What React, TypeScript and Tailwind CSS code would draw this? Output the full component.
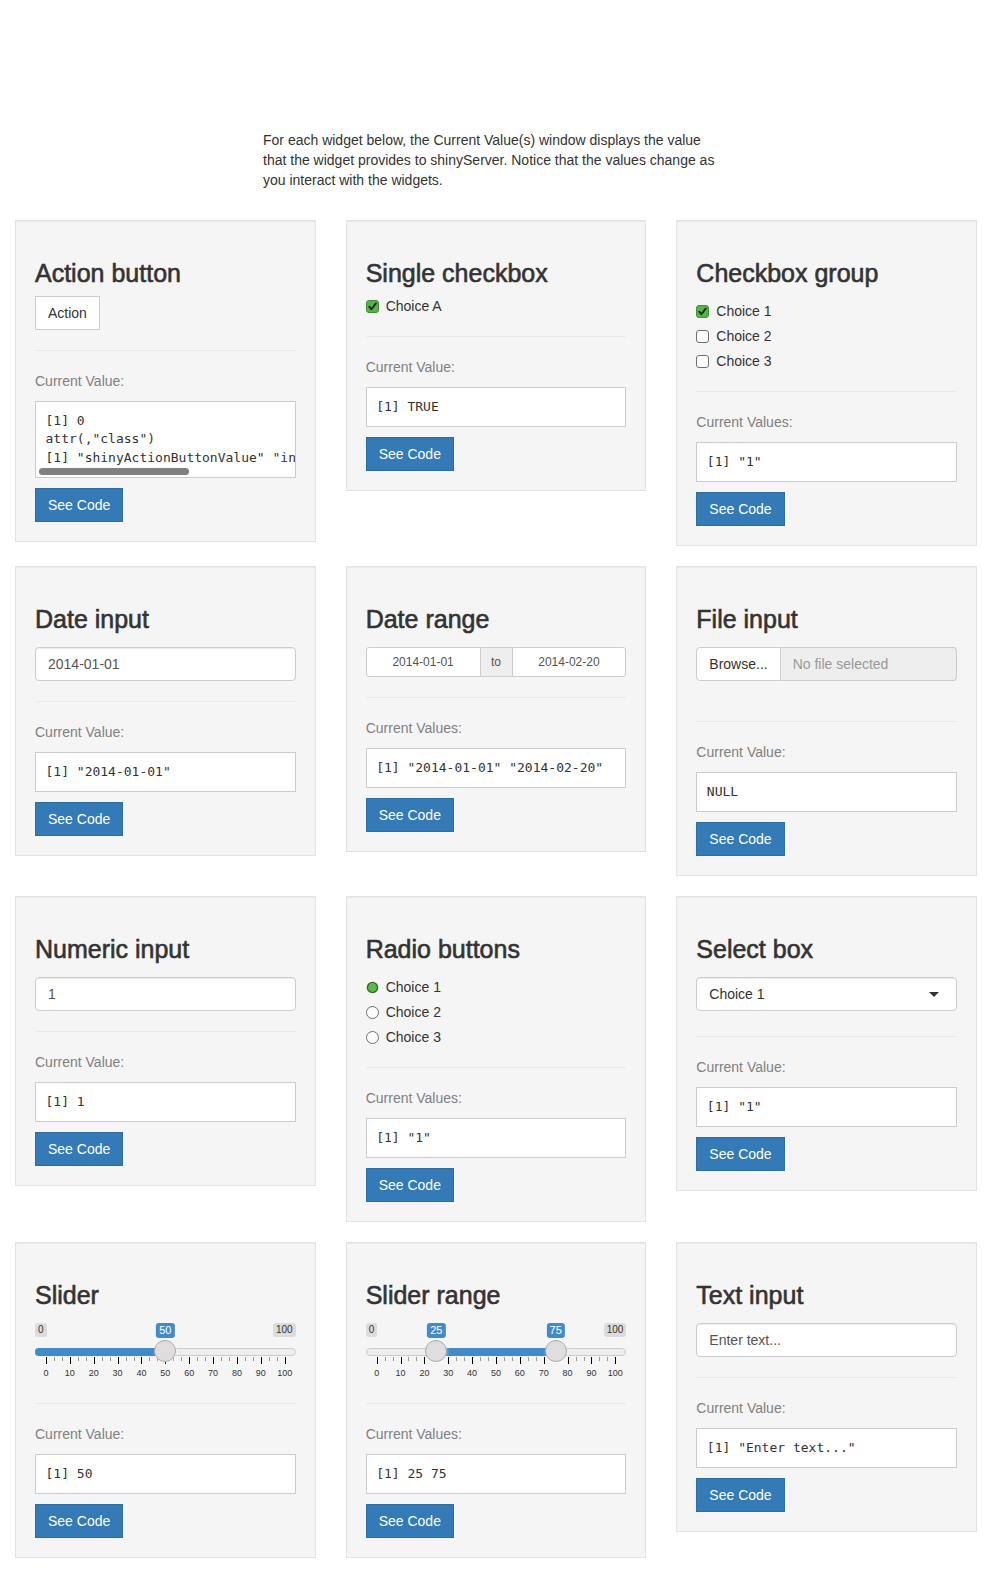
import React from "react";

const MONO = "font-['DejaVu_Sans_Mono',Menlo,monospace]";

function CheckIcon({ checked }: { checked: boolean }) {
  return (
    <svg className="mt-[4px] h-[13px] w-[13px] shrink-0" viewBox="0 0 13 13">
      {checked ? (
        <>
          <rect x="0.5" y="0.5" width="12" height="12" rx="2.5" fill="#55b34a" stroke="#3f8f36" />
          <path d="M3.2 6.6 L5.4 9.2 L9.9 3.4" fill="none" stroke="#1e2a1c" strokeWidth="1.8" strokeLinecap="round" strokeLinejoin="round" />
        </>
      ) : (
        <rect x="0.5" y="0.5" width="12" height="12" rx="2.5" fill="#ffffff" stroke="#6f6f6f" />
      )}
    </svg>
  );
}

function RadioIcon({ checked }: { checked: boolean }) {
  return (
    <svg className="mt-[4px] h-[13px] w-[13px] shrink-0" viewBox="0 0 13 13">
      {checked ? (
        <>
          <circle cx="6.5" cy="6.5" r="5.8" fill="#2f6b26" />
          <circle cx="6.5" cy="6.5" r="4.4" fill="#5cb84a" />
        </>
      ) : (
        <circle cx="6.5" cy="6.5" r="6" fill="#ffffff" stroke="#6f6f6f" />
      )}
    </svg>
  );
}

function ChoiceRow({ kind, checked, label }: { kind: "check" | "radio"; checked: boolean; label: string }) {
  return (
    <div className="flex h-[20px]">
      {kind === "check" ? <CheckIcon checked={checked} /> : <RadioIcon checked={checked} />}
      <span className="ml-[7px] text-[#333]">{label}</span>
    </div>
  );
}

function TextBox({ text }: { text: string }) {
  return (
    <div className="mt-[15px] flex h-[34px] items-center rounded-[4px] border border-[#ccc] bg-white px-[12px] text-[#555] shadow-[inset_0_1px_1px_rgba(0,0,0,0.075)]">
      {text}
    </div>
  );
}

function Slider({ values }: { values: number[] }) {
  const pos = (v: number) => `calc(11px + (100% - 22px) * ${v / 100})`;
  const hpos = (v: number) => `calc((100% - 22px) * ${v / 100})`;
  const ticks: { v: number; big: boolean }[] = [];
  for (let i = 0; i <= 30; i++) ticks.push({ v: (i * 10) / 3, big: i % 3 === 0 });
  const labels = [0, 10, 20, 30, 40, 50, 60, 70, 80, 90, 100];
  const range = values.length === 2;
  const from = range ? values[0] : 0;
  const to = range ? values[1] : values[0];
  return (
    <div className="relative mt-[15px] h-[60px] w-full">
      <div className="absolute left-0 top-0 rounded-[3px] bg-[rgba(0,0,0,0.1)] px-[3px] py-[1px] text-[10px] leading-[12px] text-[#333]">0</div>
      <div className="absolute right-0 top-0 rounded-[3px] bg-[rgba(0,0,0,0.1)] px-[3px] py-[1px] text-[10px] leading-[12px] text-[#333]">100</div>
      <div className="absolute left-0 right-0 top-[25px] h-[8px] rounded-full border border-[#cccccc] bg-[#ededed]" />
      {range ? (
        <div
          className="absolute top-[25px] h-[8px] bg-[#428bca]"
          style={{ left: pos(from), width: `calc((100% - 22px) * ${(to - from) / 100})` }}
        />
      ) : (
        <div className="absolute left-0 top-[25px] h-[8px] rounded-l-full bg-[#428bca]" style={{ width: pos(to) }} />
      )}
      {ticks.map((t, i) => (
        <div
          key={i}
          className={t.big ? "absolute top-[34px] h-[7px] w-px bg-[#000]" : "absolute top-[34px] h-[4px] w-px bg-[#999]"}
          style={{ left: pos(t.v) }}
        />
      ))}
      {labels.map((l) => (
        <div key={l} className="absolute top-[45px] -translate-x-1/2 text-[9px] leading-[10px] text-[#333]" style={{ left: pos(l) }}>
          {l}
        </div>
      ))}
      {values.map((v) => (
        <React.Fragment key={v}>
          <div
            className="absolute top-[17px] h-[22px] w-[22px] rounded-full border border-[#ababab] bg-[#dedede] shadow-[1px_1px_3px_rgba(255,255,255,0.3)]"
            style={{ left: hpos(v) }}
          />
          <div
            className="absolute top-0 -translate-x-1/2 rounded-[3px] bg-[#428bca] px-[3px] py-[1px] text-[11px] leading-[13px] text-white"
            style={{ left: pos(v) }}
          >
            {v}
          </div>
        </React.Fragment>
      ))}
    </div>
  );
}

type CardProps = {
  title: string;
  widget: React.ReactNode;
  hrClass: string;
  label: string;
  lines: string[];
  scroll?: boolean;
};

function Card({ title, widget, hrClass, label, lines, scroll }: CardProps) {
  return (
    <div className="mb-[20px] border border-[#e3e3e3] bg-[#f5f5f5] px-[19px] pb-[19px] pt-[39px] shadow-[inset_0_1px_1px_rgba(0,0,0,0.05)]">
      <h3 className="mb-[10px] text-[25px] leading-[26.4px] text-[#333] [-webkit-text-stroke:0.6px_#333]">{title}</h3>
      {widget}
      <div className={hrClass} />
      <div className="mb-[10px] h-[20px] text-[#808080]">{label}</div>
      <div className={`relative overflow-hidden border border-[#ccc] bg-white p-[9.5px] text-[13px] leading-[18.57px] text-[#333] ${MONO}`}>
        {lines.map((l, i) => (
          <div key={i} className="whitespace-pre">
            {l}
          </div>
        ))}
        {scroll && <div className="absolute bottom-[2px] left-[3px] h-[7px] w-[150px] rounded-full bg-[#808080]" />}
      </div>
      <div className="mt-[10px] flex">
        <div className="flex h-[34px] items-center border border-[#2e6da4] bg-[#337ab7] px-[12px] text-white">See Code</div>
      </div>
    </div>
  );
}

export default function App() {
  const hr20 = "mt-[20px] mb-[20px] h-px bg-[#eaeaea]";
  const hr25 = "mt-[25px] mb-[20px] h-px bg-[#eaeaea]";
  const hr40 = "mt-[40px] mb-[20px] h-px bg-[#eaeaea]";

  const cards: CardProps[] = [
    {
      title: "Action button",
      widget: (
        <div className="flex">
          <div className="flex h-[34px] items-center border border-[#ccc] bg-white px-[12px] text-[#333]">Action</div>
        </div>
      ),
      hrClass: hr20,
      label: "Current Value:",
      lines: ["[1] 0", 'attr(,"class")', '[1] "shinyActionButtonValue" "integer"'],
      scroll: true,
    },
    {
      title: "Single checkbox",
      widget: <ChoiceRow kind="check" checked label="Choice A" />,
      hrClass: hr20,
      label: "Current Value:",
      lines: ["[1] TRUE"],
    },
    {
      title: "Checkbox group",
      widget: (
        <div className="mt-[15px] flex flex-col gap-[5px]">
          <ChoiceRow kind="check" checked label="Choice 1" />
          <ChoiceRow kind="check" checked={false} label="Choice 2" />
          <ChoiceRow kind="check" checked={false} label="Choice 3" />
        </div>
      ),
      hrClass: hr20,
      label: "Current Values:",
      lines: ['[1] "1"'],
    },
    {
      title: "Date input",
      widget: <TextBox text="2014-01-01" />,
      hrClass: hr20,
      label: "Current Value:",
      lines: ['[1] "2014-01-01"'],
    },
    {
      title: "Date range",
      widget: (
        <div className="mt-[15px] flex h-[30px] text-[12px] text-[#555]">
          <div className="flex flex-1 items-center justify-center rounded-l-[3px] border border-[#ccc] bg-white">2014-01-01</div>
          <div className="flex w-[31px] items-center justify-center border-y border-[#ccc] bg-[#eee]">to</div>
          <div className="flex flex-1 items-center justify-center rounded-r-[3px] border border-[#ccc] bg-white">2014-02-20</div>
        </div>
      ),
      hrClass: hr20,
      label: "Current Values:",
      lines: ['[1] "2014-01-01" "2014-02-20"'],
    },
    {
      title: "File input",
      widget: (
        <div className="mt-[15px] flex h-[34px]">
          <div className="flex items-center rounded-l-[4px] border border-[#ccc] bg-white px-[12px] text-[#333]">Browse...</div>
          <div className="flex flex-1 items-center rounded-r-[4px] border border-l-0 border-[#ccc] bg-[#eee] px-[12px] text-[#999]">No file selected</div>
        </div>
      ),
      hrClass: hr40,
      label: "Current Value:",
      lines: ["NULL"],
    },
    {
      title: "Numeric input",
      widget: <TextBox text="1" />,
      hrClass: hr20,
      label: "Current Value:",
      lines: ["[1] 1"],
    },
    {
      title: "Radio buttons",
      widget: (
        <div className="mt-[15px] flex flex-col gap-[5px]">
          <ChoiceRow kind="radio" checked label="Choice 1" />
          <ChoiceRow kind="radio" checked={false} label="Choice 2" />
          <ChoiceRow kind="radio" checked={false} label="Choice 3" />
        </div>
      ),
      hrClass: hr20,
      label: "Current Values:",
      lines: ['[1] "1"'],
    },
    {
      title: "Select box",
      widget: (
        <div className="mt-[15px] flex h-[34px] items-center justify-between rounded-[4px] border border-[#ccc] bg-white pl-[12px] pr-[17px] text-[#333] shadow-[inset_0_1px_1px_rgba(0,0,0,0.075)]">
          <span>Choice 1</span>
          <svg width="10" height="5" viewBox="0 0 10 5">
            <path d="M0 0 L10 0 L5 5 Z" fill="#333" />
          </svg>
        </div>
      ),
      hrClass: hr25,
      label: "Current Value:",
      lines: ['[1] "1"'],
    },
    {
      title: "Slider",
      widget: <Slider values={[50]} />,
      hrClass: hr20,
      label: "Current Value:",
      lines: ["[1] 50"],
    },
    {
      title: "Slider range",
      widget: <Slider values={[25, 75]} />,
      hrClass: hr20,
      label: "Current Values:",
      lines: ["[1] 25 75"],
    },
    {
      title: "Text input",
      widget: <TextBox text="Enter text..." />,
      hrClass: hr20,
      label: "Current Value:",
      lines: ['[1] "Enter text..."'],
    },
  ];

  return (
    <div className="min-h-[1577px] bg-white font-['Liberation_Sans',Arial,Helvetica,sans-serif] text-[14px] leading-[20px] text-[#333]">
      <p className="ml-[263px] w-[466px] pt-[130px]">
        For each widget below, the Current Value(s) window displays the value
        <br />
        that the widget provides to shinyServer. Notice that the values change as
        <br />
        you interact with the widgets.
      </p>
      <div className="mt-[30px] grid grid-cols-3 items-start gap-x-[30px] px-[15px]">
        {cards.map((c) => (
          <Card key={c.title} {...c} />
        ))}
      </div>
    </div>
  );
}
